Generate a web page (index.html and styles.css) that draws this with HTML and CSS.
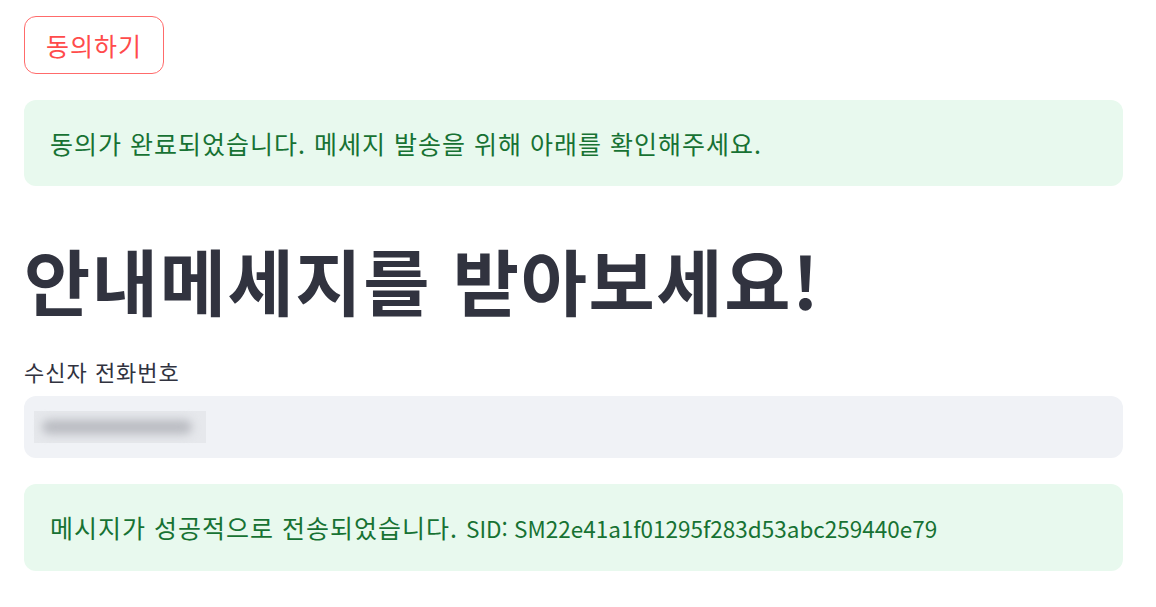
FILE: index.html
```html
<!DOCTYPE html>
<html lang="ko">
<head>
  <meta charset="UTF-8">
  <meta name="viewport" content="width=device-width, initial-scale=1">
  <title>안내메세지</title>
  <link rel="stylesheet" href="styles.css">
</head>
<body>
  <main class="page">
    <!-- Consent button -->
    <div class="block">
      <button class="btn-outline" type="button">동의하기</button>
    </div>

    <!-- Consent done -->
    <div class="alert success">동의가 완료되었습니다. 메세지 발송을 위해 아래를 확인해주세요.</div>

    <h1 class="title">안내메세지를 받아보세요!</h1>

    <!-- Phone number input -->
    <div class="field">
      <label class="field-label" for="phone">수신자 전화번호</label>
      <div class="input-box">
        <span class="blurred" aria-hidden="true"><span class="blur-text"></span></span>
      </div>
    </div>

    <!-- Send result -->
    <div class="alert success">메시지가 성공적으로 전송되었습니다. <span class="sid">SID: SM22e41a1f01295f283d53abc259440e79</span></div>
  </main>
</body>
</html>
```

FILE: styles.css
```css
/* General page */
body {
  margin: 0;
  background-color: #ffffff;
  color: #31333f;
  font-family: "Noto Sans CJK KR", "Noto Sans", sans-serif;
}
.page {
  width: 1099px;
  padding: 16px 0 0 24px;
  display: flex;
  flex-direction: column;
  gap: 26px;
}

/* Button */
.btn-outline {
  height: 58px;
  padding: 0 21px;
  font-family: inherit;
  font-size: 25px;
  letter-spacing: 1px;
  color: #ff4b4b;
  background-color: #ffffff;
  border: 1.5px solid #ff6b6b;
  border-radius: 12px;
  cursor: pointer;
}

/* Alerts */
.alert {
  padding: 24px 26px;
  font-size: 25px;
  letter-spacing: 1px;
  line-height: 38px;
  border-radius: 12px;
}
.success {
  background-color: #e8f9ee;
  color: #177233;
}
.sid {
  font-size: 22.5px;
  letter-spacing: 0;
}

/* Title */
.title {
  margin: 0;
  padding: 24px 0 8px;
  font-size: 72px;
  font-weight: 700;
  line-height: 86px;
  letter-spacing: 1.6px;
  color: #31333f;
}

/* Input field */
.field {
  display: flex;
  flex-direction: column;
  gap: 10px;
}
.field-label {
  font-size: 22px;
  letter-spacing: 1px;
  line-height: 30px;
  color: #31333f;
}
.input-box {
  height: 62px;
  background-color: #f0f2f6;
  border-radius: 12px;
  display: flex;
  align-items: center;
  padding-left: 10px;
}
.blurred {
  width: 172px;
  height: 32px;
  background-color: #e6e8ec;
  display: flex;
  align-items: center;
  padding-left: 8px;
  box-sizing: border-box;
}
.blur-text {
  width: 150px;
  height: 14px;
  background-color: #b9bbc1;
  border-radius: 8px;
  filter: blur(5px);
}
```
